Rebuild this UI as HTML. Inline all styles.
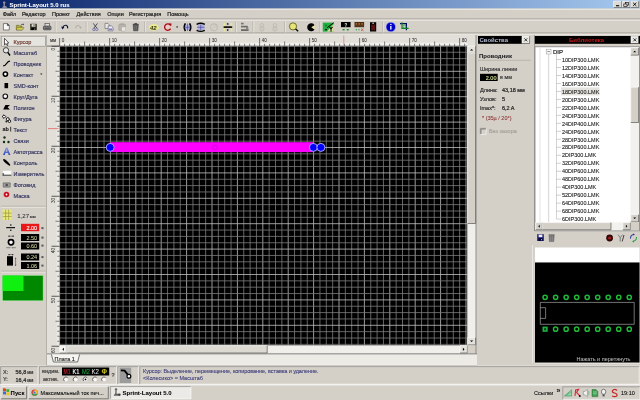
<!DOCTYPE html>
<html><head><meta charset="utf-8"><style>
html,body{margin:0;padding:0;width:640px;height:400px;overflow:hidden;background:#d4d0c8}
svg{display:block;font-family:'Liberation Sans',sans-serif;will-change:transform}
</style></head><body>
<svg width="640" height="400" viewBox="0 0 640 400" style="font-family:'Liberation Sans',sans-serif"><rect x="0" y="0" width="640" height="400" fill="#d4d0c8" /><defs><linearGradient id="tg" x1="0" x2="1" y1="0" y2="0"><stop offset="0" stop-color="#0a246a"/><stop offset="1" stop-color="#a6caf0"/></linearGradient><filter id="bl" x="-1%" y="-1%" width="102%" height="102%"><feGaussianBlur stdDeviation="0.25"/></filter></defs><rect x="0" y="0" width="640" height="8.6" fill="url(#tg)" /><text x="9.5" y="6.6" font-size="6" fill="#fff" font-weight="bold" text-anchor="start" stroke="#fff" stroke-width="0.05" >Sprint-Layout 5.0 rus</text><rect x="613.6" y="1.1" width="7.9" height="6.5" fill="#dcdad4"/><path d="M613.6,7.6 V1.1 H621.5" fill="none" stroke="#ffffff" stroke-width="0.6"/><path d="M613.6,7.6 H621.5 V1.1" fill="none" stroke="#404040" stroke-width="0.6"/><rect x="622.2" y="1.1" width="7.9" height="6.5" fill="#dcdad4"/><path d="M622.2,7.6 V1.1 H630.1" fill="none" stroke="#ffffff" stroke-width="0.6"/><path d="M622.2,7.6 H630.1 V1.1" fill="none" stroke="#404040" stroke-width="0.6"/><rect x="630.8" y="1.1" width="7.9" height="6.5" fill="#dcdad4"/><path d="M630.8,7.6 V1.1 H638.6999999999999" fill="none" stroke="#ffffff" stroke-width="0.6"/><path d="M630.8,7.6 H638.6999999999999 V1.1" fill="none" stroke="#404040" stroke-width="0.6"/><rect x="616" y="5.2" width="3.2" height="1.1" fill="#000" /><rect x="625.4" y="2.6" width="3.2" height="2.6" fill="none" stroke="#000" stroke-width="0.6"/><rect x="623.8" y="4" width="3.2" height="2.6" fill="#dcdad4" stroke="#000" stroke-width="0.6"/><path d="M633.15,2.7499999999999996 L636.35,5.949999999999999 M636.35,2.7499999999999996 L633.15,5.949999999999999" stroke="#000" stroke-width="0.9"/><circle cx="4.2" cy="2.6" r="1.2" fill="#9a9a9a"/><path d="M3.6,3.6 L3.6,6 L2,7.8 H7.4 L6.2,6.2 H4.8 V3.6 Z" fill="#a0a0a0"/><rect x="0" y="8.6" width="640" height="10" fill="#d4d0c8" /><line x1="0" y1="9.3" x2="640" y2="9.3" stroke="#f4f2ee" stroke-width="0.8" /><text x="2.8" y="16.2" font-size="5.5" fill="#202020" font-weight="normal" text-anchor="start" stroke="#202020" stroke-width="0.2" >Файл</text><text x="21.9" y="16.2" font-size="5.5" fill="#202020" font-weight="normal" text-anchor="start" stroke="#202020" stroke-width="0.2" >Редактор</text><text x="52" y="16.2" font-size="5.5" fill="#202020" font-weight="normal" text-anchor="start" stroke="#202020" stroke-width="0.2" >Проект</text><text x="76.6" y="16.2" font-size="5.5" fill="#202020" font-weight="normal" text-anchor="start" stroke="#202020" stroke-width="0.2" >Действия</text><text x="107.2" y="16.2" font-size="5.5" fill="#202020" font-weight="normal" text-anchor="start" stroke="#202020" stroke-width="0.2" >Опции</text><text x="129" y="16.2" font-size="5.5" fill="#202020" font-weight="normal" text-anchor="start" stroke="#202020" stroke-width="0.2" >Регистрация</text><text x="167.3" y="16.2" font-size="5.5" fill="#202020" font-weight="normal" text-anchor="start" stroke="#202020" stroke-width="0.2" >Помощь</text><line x1="0" y1="18.8" x2="640" y2="18.8" stroke="#a09c94" stroke-width="0.7" /><line x1="0" y1="20.2" x2="640" y2="20.2" stroke="#f4f2ee" stroke-width="0.8" /><line x1="0" y1="32.9" x2="640" y2="32.9" stroke="#9c988f" stroke-width="0.8" /><line x1="0" y1="34.3" x2="640" y2="34.3" stroke="#f6f4f0" stroke-width="0.8" /><rect x="1.2" y="36.2" width="44.3" height="10" fill="#e6e4de" stroke="#8c8880" stroke-width="0.6"/><text x="13.5" y="43.5" font-size="5.5" fill="#683428" font-weight="normal" text-anchor="start" stroke="#683428" stroke-width="0.15" >Курсор</text><text x="13.5" y="54.5" font-size="5.5" fill="#32325e" font-weight="normal" text-anchor="start" stroke="#32325e" stroke-width="0.15" >Масштаб</text><text x="13.5" y="65.5" font-size="5.5" fill="#32325e" font-weight="normal" text-anchor="start" stroke="#32325e" stroke-width="0.15" >Проводник</text><text x="13.5" y="76.5" font-size="5.5" fill="#32325e" font-weight="normal" text-anchor="start" stroke="#32325e" stroke-width="0.15" >Контакт</text><text x="13.5" y="87.5" font-size="5.5" fill="#32325e" font-weight="normal" text-anchor="start" stroke="#32325e" stroke-width="0.15" >SMD-конт</text><text x="13.5" y="98.5" font-size="5.5" fill="#32325e" font-weight="normal" text-anchor="start" stroke="#32325e" stroke-width="0.15" >Круг/Дуга</text><text x="13.5" y="109.5" font-size="5.5" fill="#32325e" font-weight="normal" text-anchor="start" stroke="#32325e" stroke-width="0.15" >Полигон</text><text x="13.5" y="120.5" font-size="5.5" fill="#32325e" font-weight="normal" text-anchor="start" stroke="#32325e" stroke-width="0.15" >Фигура</text><text x="13.5" y="131.5" font-size="5.5" fill="#32325e" font-weight="normal" text-anchor="start" stroke="#32325e" stroke-width="0.15" >Текст</text><text x="13.5" y="142.5" font-size="5.5" fill="#32325e" font-weight="normal" text-anchor="start" stroke="#32325e" stroke-width="0.15" >Связи</text><text x="13.5" y="153.5" font-size="5.5" fill="#32325e" font-weight="normal" text-anchor="start" stroke="#32325e" stroke-width="0.15" >Автотрасса</text><text x="13.5" y="164.5" font-size="5.5" fill="#32325e" font-weight="normal" text-anchor="start" stroke="#32325e" stroke-width="0.15" >Контроль</text><text x="13.5" y="175.5" font-size="5.5" fill="#32325e" font-weight="normal" text-anchor="start" stroke="#32325e" stroke-width="0.15" >Измеритель</text><text x="13.5" y="186.5" font-size="5.5" fill="#32325e" font-weight="normal" text-anchor="start" stroke="#32325e" stroke-width="0.15" >Фотовид</text><text x="13.5" y="197.5" font-size="5.5" fill="#32325e" font-weight="normal" text-anchor="start" stroke="#32325e" stroke-width="0.15" >Маска</text><line x1="46.6" y1="35" x2="46.6" y2="366" stroke="#a8a49c" stroke-width="0.8" /><rect x="47" y="34.8" width="429" height="11.4" fill="#e2dfd9" /><rect x="59.6" y="42.8" width="408" height="2.8" fill="#f2f0ec" /><line x1="59.6" y1="45.9" x2="467.5" y2="45.9" stroke="#8a8a8a" stroke-width="0.7" /><rect x="47" y="46.2" width="12.6" height="308" fill="#e2dfd9" /><rect x="56.6" y="46.2" width="2.8" height="299" fill="#ebe9e4" /><text x="50" y="42.2" font-size="4.5" fill="#303030" font-weight="normal" text-anchor="start" stroke="#303030" stroke-width="0.1" >мм</text><line x1="47" y1="46.1" x2="59.6" y2="46.1" stroke="#404040" stroke-width="0.7" /><rect x="59.6" y="46.25" width="407.79999999999995" height="299.15" fill="#000" /><g filter="url(#bl)"><line x1="59.60" y1="46.25" x2="59.60" y2="345.4" stroke="#c0c0c0" stroke-width="0.8"/><line x1="65.95" y1="46.25" x2="65.95" y2="345.4" stroke="#7c7c7c" stroke-width="0.8"/><line x1="72.30" y1="46.25" x2="72.30" y2="345.4" stroke="#7c7c7c" stroke-width="0.8"/><line x1="78.65" y1="46.25" x2="78.65" y2="345.4" stroke="#7c7c7c" stroke-width="0.8"/><line x1="85.00" y1="46.25" x2="85.00" y2="345.4" stroke="#c0c0c0" stroke-width="0.8"/><line x1="91.35" y1="46.25" x2="91.35" y2="345.4" stroke="#7c7c7c" stroke-width="0.8"/><line x1="97.70" y1="46.25" x2="97.70" y2="345.4" stroke="#7c7c7c" stroke-width="0.8"/><line x1="104.05" y1="46.25" x2="104.05" y2="345.4" stroke="#7c7c7c" stroke-width="0.8"/><line x1="110.40" y1="46.25" x2="110.40" y2="345.4" stroke="#c0c0c0" stroke-width="0.8"/><line x1="116.75" y1="46.25" x2="116.75" y2="345.4" stroke="#7c7c7c" stroke-width="0.8"/><line x1="123.10" y1="46.25" x2="123.10" y2="345.4" stroke="#7c7c7c" stroke-width="0.8"/><line x1="129.45" y1="46.25" x2="129.45" y2="345.4" stroke="#7c7c7c" stroke-width="0.8"/><line x1="135.80" y1="46.25" x2="135.80" y2="345.4" stroke="#c0c0c0" stroke-width="0.8"/><line x1="142.15" y1="46.25" x2="142.15" y2="345.4" stroke="#7c7c7c" stroke-width="0.8"/><line x1="148.50" y1="46.25" x2="148.50" y2="345.4" stroke="#7c7c7c" stroke-width="0.8"/><line x1="154.85" y1="46.25" x2="154.85" y2="345.4" stroke="#7c7c7c" stroke-width="0.8"/><line x1="161.20" y1="46.25" x2="161.20" y2="345.4" stroke="#c0c0c0" stroke-width="0.8"/><line x1="167.55" y1="46.25" x2="167.55" y2="345.4" stroke="#7c7c7c" stroke-width="0.8"/><line x1="173.90" y1="46.25" x2="173.90" y2="345.4" stroke="#7c7c7c" stroke-width="0.8"/><line x1="180.25" y1="46.25" x2="180.25" y2="345.4" stroke="#7c7c7c" stroke-width="0.8"/><line x1="186.60" y1="46.25" x2="186.60" y2="345.4" stroke="#c0c0c0" stroke-width="0.8"/><line x1="192.95" y1="46.25" x2="192.95" y2="345.4" stroke="#7c7c7c" stroke-width="0.8"/><line x1="199.30" y1="46.25" x2="199.30" y2="345.4" stroke="#7c7c7c" stroke-width="0.8"/><line x1="205.65" y1="46.25" x2="205.65" y2="345.4" stroke="#7c7c7c" stroke-width="0.8"/><line x1="212.00" y1="46.25" x2="212.00" y2="345.4" stroke="#c0c0c0" stroke-width="0.8"/><line x1="218.35" y1="46.25" x2="218.35" y2="345.4" stroke="#7c7c7c" stroke-width="0.8"/><line x1="224.70" y1="46.25" x2="224.70" y2="345.4" stroke="#7c7c7c" stroke-width="0.8"/><line x1="231.05" y1="46.25" x2="231.05" y2="345.4" stroke="#7c7c7c" stroke-width="0.8"/><line x1="237.40" y1="46.25" x2="237.40" y2="345.4" stroke="#c0c0c0" stroke-width="0.8"/><line x1="243.75" y1="46.25" x2="243.75" y2="345.4" stroke="#7c7c7c" stroke-width="0.8"/><line x1="250.10" y1="46.25" x2="250.10" y2="345.4" stroke="#7c7c7c" stroke-width="0.8"/><line x1="256.45" y1="46.25" x2="256.45" y2="345.4" stroke="#7c7c7c" stroke-width="0.8"/><line x1="262.80" y1="46.25" x2="262.80" y2="345.4" stroke="#c0c0c0" stroke-width="0.8"/><line x1="269.15" y1="46.25" x2="269.15" y2="345.4" stroke="#7c7c7c" stroke-width="0.8"/><line x1="275.50" y1="46.25" x2="275.50" y2="345.4" stroke="#7c7c7c" stroke-width="0.8"/><line x1="281.85" y1="46.25" x2="281.85" y2="345.4" stroke="#7c7c7c" stroke-width="0.8"/><line x1="288.20" y1="46.25" x2="288.20" y2="345.4" stroke="#c0c0c0" stroke-width="0.8"/><line x1="294.55" y1="46.25" x2="294.55" y2="345.4" stroke="#7c7c7c" stroke-width="0.8"/><line x1="300.90" y1="46.25" x2="300.90" y2="345.4" stroke="#7c7c7c" stroke-width="0.8"/><line x1="307.25" y1="46.25" x2="307.25" y2="345.4" stroke="#7c7c7c" stroke-width="0.8"/><line x1="313.60" y1="46.25" x2="313.60" y2="345.4" stroke="#c0c0c0" stroke-width="0.8"/><line x1="319.95" y1="46.25" x2="319.95" y2="345.4" stroke="#7c7c7c" stroke-width="0.8"/><line x1="326.30" y1="46.25" x2="326.30" y2="345.4" stroke="#7c7c7c" stroke-width="0.8"/><line x1="332.65" y1="46.25" x2="332.65" y2="345.4" stroke="#7c7c7c" stroke-width="0.8"/><line x1="339.00" y1="46.25" x2="339.00" y2="345.4" stroke="#c0c0c0" stroke-width="0.8"/><line x1="345.35" y1="46.25" x2="345.35" y2="345.4" stroke="#7c7c7c" stroke-width="0.8"/><line x1="351.70" y1="46.25" x2="351.70" y2="345.4" stroke="#7c7c7c" stroke-width="0.8"/><line x1="358.05" y1="46.25" x2="358.05" y2="345.4" stroke="#7c7c7c" stroke-width="0.8"/><line x1="364.40" y1="46.25" x2="364.40" y2="345.4" stroke="#c0c0c0" stroke-width="0.8"/><line x1="370.75" y1="46.25" x2="370.75" y2="345.4" stroke="#7c7c7c" stroke-width="0.8"/><line x1="377.10" y1="46.25" x2="377.10" y2="345.4" stroke="#7c7c7c" stroke-width="0.8"/><line x1="383.45" y1="46.25" x2="383.45" y2="345.4" stroke="#7c7c7c" stroke-width="0.8"/><line x1="389.80" y1="46.25" x2="389.80" y2="345.4" stroke="#c0c0c0" stroke-width="0.8"/><line x1="396.15" y1="46.25" x2="396.15" y2="345.4" stroke="#7c7c7c" stroke-width="0.8"/><line x1="402.50" y1="46.25" x2="402.50" y2="345.4" stroke="#7c7c7c" stroke-width="0.8"/><line x1="408.85" y1="46.25" x2="408.85" y2="345.4" stroke="#7c7c7c" stroke-width="0.8"/><line x1="415.20" y1="46.25" x2="415.20" y2="345.4" stroke="#c0c0c0" stroke-width="0.8"/><line x1="421.55" y1="46.25" x2="421.55" y2="345.4" stroke="#7c7c7c" stroke-width="0.8"/><line x1="427.90" y1="46.25" x2="427.90" y2="345.4" stroke="#7c7c7c" stroke-width="0.8"/><line x1="434.25" y1="46.25" x2="434.25" y2="345.4" stroke="#7c7c7c" stroke-width="0.8"/><line x1="440.60" y1="46.25" x2="440.60" y2="345.4" stroke="#c0c0c0" stroke-width="0.8"/><line x1="446.95" y1="46.25" x2="446.95" y2="345.4" stroke="#7c7c7c" stroke-width="0.8"/><line x1="453.30" y1="46.25" x2="453.30" y2="345.4" stroke="#7c7c7c" stroke-width="0.8"/><line x1="459.65" y1="46.25" x2="459.65" y2="345.4" stroke="#7c7c7c" stroke-width="0.8"/><line x1="466.00" y1="46.25" x2="466.00" y2="345.4" stroke="#c0c0c0" stroke-width="0.8"/><line x1="59.6" y1="45.90" x2="467.4" y2="45.90" stroke="#c0c0c0" stroke-width="0.8"/><line x1="59.6" y1="52.25" x2="467.4" y2="52.25" stroke="#7c7c7c" stroke-width="0.8"/><line x1="59.6" y1="58.60" x2="467.4" y2="58.60" stroke="#7c7c7c" stroke-width="0.8"/><line x1="59.6" y1="64.95" x2="467.4" y2="64.95" stroke="#7c7c7c" stroke-width="0.8"/><line x1="59.6" y1="71.30" x2="467.4" y2="71.30" stroke="#c0c0c0" stroke-width="0.8"/><line x1="59.6" y1="77.65" x2="467.4" y2="77.65" stroke="#7c7c7c" stroke-width="0.8"/><line x1="59.6" y1="84.00" x2="467.4" y2="84.00" stroke="#7c7c7c" stroke-width="0.8"/><line x1="59.6" y1="90.35" x2="467.4" y2="90.35" stroke="#7c7c7c" stroke-width="0.8"/><line x1="59.6" y1="96.70" x2="467.4" y2="96.70" stroke="#c0c0c0" stroke-width="0.8"/><line x1="59.6" y1="103.05" x2="467.4" y2="103.05" stroke="#7c7c7c" stroke-width="0.8"/><line x1="59.6" y1="109.40" x2="467.4" y2="109.40" stroke="#7c7c7c" stroke-width="0.8"/><line x1="59.6" y1="115.75" x2="467.4" y2="115.75" stroke="#7c7c7c" stroke-width="0.8"/><line x1="59.6" y1="122.10" x2="467.4" y2="122.10" stroke="#c0c0c0" stroke-width="0.8"/><line x1="59.6" y1="128.45" x2="467.4" y2="128.45" stroke="#7c7c7c" stroke-width="0.8"/><line x1="59.6" y1="134.80" x2="467.4" y2="134.80" stroke="#7c7c7c" stroke-width="0.8"/><line x1="59.6" y1="141.15" x2="467.4" y2="141.15" stroke="#7c7c7c" stroke-width="0.8"/><line x1="59.6" y1="147.50" x2="467.4" y2="147.50" stroke="#c0c0c0" stroke-width="0.8"/><line x1="59.6" y1="153.85" x2="467.4" y2="153.85" stroke="#7c7c7c" stroke-width="0.8"/><line x1="59.6" y1="160.20" x2="467.4" y2="160.20" stroke="#7c7c7c" stroke-width="0.8"/><line x1="59.6" y1="166.55" x2="467.4" y2="166.55" stroke="#7c7c7c" stroke-width="0.8"/><line x1="59.6" y1="172.90" x2="467.4" y2="172.90" stroke="#c0c0c0" stroke-width="0.8"/><line x1="59.6" y1="179.25" x2="467.4" y2="179.25" stroke="#7c7c7c" stroke-width="0.8"/><line x1="59.6" y1="185.60" x2="467.4" y2="185.60" stroke="#7c7c7c" stroke-width="0.8"/><line x1="59.6" y1="191.95" x2="467.4" y2="191.95" stroke="#7c7c7c" stroke-width="0.8"/><line x1="59.6" y1="198.30" x2="467.4" y2="198.30" stroke="#c0c0c0" stroke-width="0.8"/><line x1="59.6" y1="204.65" x2="467.4" y2="204.65" stroke="#7c7c7c" stroke-width="0.8"/><line x1="59.6" y1="211.00" x2="467.4" y2="211.00" stroke="#7c7c7c" stroke-width="0.8"/><line x1="59.6" y1="217.35" x2="467.4" y2="217.35" stroke="#7c7c7c" stroke-width="0.8"/><line x1="59.6" y1="223.70" x2="467.4" y2="223.70" stroke="#c0c0c0" stroke-width="0.8"/><line x1="59.6" y1="230.05" x2="467.4" y2="230.05" stroke="#7c7c7c" stroke-width="0.8"/><line x1="59.6" y1="236.40" x2="467.4" y2="236.40" stroke="#7c7c7c" stroke-width="0.8"/><line x1="59.6" y1="242.75" x2="467.4" y2="242.75" stroke="#7c7c7c" stroke-width="0.8"/><line x1="59.6" y1="249.10" x2="467.4" y2="249.10" stroke="#c0c0c0" stroke-width="0.8"/><line x1="59.6" y1="255.45" x2="467.4" y2="255.45" stroke="#7c7c7c" stroke-width="0.8"/><line x1="59.6" y1="261.80" x2="467.4" y2="261.80" stroke="#7c7c7c" stroke-width="0.8"/><line x1="59.6" y1="268.15" x2="467.4" y2="268.15" stroke="#7c7c7c" stroke-width="0.8"/><line x1="59.6" y1="274.50" x2="467.4" y2="274.50" stroke="#c0c0c0" stroke-width="0.8"/><line x1="59.6" y1="280.85" x2="467.4" y2="280.85" stroke="#7c7c7c" stroke-width="0.8"/><line x1="59.6" y1="287.20" x2="467.4" y2="287.20" stroke="#7c7c7c" stroke-width="0.8"/><line x1="59.6" y1="293.55" x2="467.4" y2="293.55" stroke="#7c7c7c" stroke-width="0.8"/><line x1="59.6" y1="299.90" x2="467.4" y2="299.90" stroke="#c0c0c0" stroke-width="0.8"/><line x1="59.6" y1="306.25" x2="467.4" y2="306.25" stroke="#7c7c7c" stroke-width="0.8"/><line x1="59.6" y1="312.60" x2="467.4" y2="312.60" stroke="#7c7c7c" stroke-width="0.8"/><line x1="59.6" y1="318.95" x2="467.4" y2="318.95" stroke="#7c7c7c" stroke-width="0.8"/><line x1="59.6" y1="325.30" x2="467.4" y2="325.30" stroke="#c0c0c0" stroke-width="0.8"/><line x1="59.6" y1="331.65" x2="467.4" y2="331.65" stroke="#7c7c7c" stroke-width="0.8"/><line x1="59.6" y1="338.00" x2="467.4" y2="338.00" stroke="#7c7c7c" stroke-width="0.8"/><line x1="59.6" y1="344.35" x2="467.4" y2="344.35" stroke="#7c7c7c" stroke-width="0.8"/></g><line x1="59.6" y1="38" x2="59.6" y2="46" stroke="#404040" stroke-width="0.7" /><text x="61.800000000000004" y="41.8" font-size="4.6" fill="#383838" font-weight="normal" text-anchor="start" stroke="#383838" stroke-width="0.06" >0</text><line x1="64.6" y1="43.8" x2="64.6" y2="46" stroke="#303030" stroke-width="0.6" /><line x1="69.6" y1="43.8" x2="69.6" y2="46" stroke="#303030" stroke-width="0.6" /><line x1="74.6" y1="43.8" x2="74.6" y2="46" stroke="#303030" stroke-width="0.6" /><line x1="79.6" y1="43.8" x2="79.6" y2="46" stroke="#303030" stroke-width="0.6" /><line x1="84.6" y1="41.5" x2="84.6" y2="46" stroke="#303030" stroke-width="0.6" /><line x1="89.6" y1="43.8" x2="89.6" y2="46" stroke="#303030" stroke-width="0.6" /><line x1="94.6" y1="43.8" x2="94.6" y2="46" stroke="#303030" stroke-width="0.6" /><line x1="99.6" y1="43.8" x2="99.6" y2="46" stroke="#303030" stroke-width="0.6" /><line x1="104.6" y1="43.8" x2="104.6" y2="46" stroke="#303030" stroke-width="0.6" /><line x1="109.6" y1="38" x2="109.6" y2="46" stroke="#404040" stroke-width="0.7" /><text x="111.8" y="41.8" font-size="4.6" fill="#383838" font-weight="normal" text-anchor="start" stroke="#383838" stroke-width="0.06" >10</text><line x1="114.6" y1="43.8" x2="114.6" y2="46" stroke="#303030" stroke-width="0.6" /><line x1="119.6" y1="43.8" x2="119.6" y2="46" stroke="#303030" stroke-width="0.6" /><line x1="124.6" y1="43.8" x2="124.6" y2="46" stroke="#303030" stroke-width="0.6" /><line x1="129.6" y1="43.8" x2="129.6" y2="46" stroke="#303030" stroke-width="0.6" /><line x1="134.6" y1="41.5" x2="134.6" y2="46" stroke="#303030" stroke-width="0.6" /><line x1="139.6" y1="43.8" x2="139.6" y2="46" stroke="#303030" stroke-width="0.6" /><line x1="144.6" y1="43.8" x2="144.6" y2="46" stroke="#303030" stroke-width="0.6" /><line x1="149.6" y1="43.8" x2="149.6" y2="46" stroke="#303030" stroke-width="0.6" /><line x1="154.6" y1="43.8" x2="154.6" y2="46" stroke="#303030" stroke-width="0.6" /><line x1="159.6" y1="38" x2="159.6" y2="46" stroke="#404040" stroke-width="0.7" /><text x="161.79999999999998" y="41.8" font-size="4.6" fill="#383838" font-weight="normal" text-anchor="start" stroke="#383838" stroke-width="0.06" >20</text><line x1="164.6" y1="43.8" x2="164.6" y2="46" stroke="#303030" stroke-width="0.6" /><line x1="169.6" y1="43.8" x2="169.6" y2="46" stroke="#303030" stroke-width="0.6" /><line x1="174.6" y1="43.8" x2="174.6" y2="46" stroke="#303030" stroke-width="0.6" /><line x1="179.6" y1="43.8" x2="179.6" y2="46" stroke="#303030" stroke-width="0.6" /><line x1="184.6" y1="41.5" x2="184.6" y2="46" stroke="#303030" stroke-width="0.6" /><line x1="189.6" y1="43.8" x2="189.6" y2="46" stroke="#303030" stroke-width="0.6" /><line x1="194.6" y1="43.8" x2="194.6" y2="46" stroke="#303030" stroke-width="0.6" /><line x1="199.6" y1="43.8" x2="199.6" y2="46" stroke="#303030" stroke-width="0.6" /><line x1="204.6" y1="43.8" x2="204.6" y2="46" stroke="#303030" stroke-width="0.6" /><line x1="209.6" y1="38" x2="209.6" y2="46" stroke="#404040" stroke-width="0.7" /><text x="211.79999999999998" y="41.8" font-size="4.6" fill="#383838" font-weight="normal" text-anchor="start" stroke="#383838" stroke-width="0.06" >30</text><line x1="214.6" y1="43.8" x2="214.6" y2="46" stroke="#303030" stroke-width="0.6" /><line x1="219.6" y1="43.8" x2="219.6" y2="46" stroke="#303030" stroke-width="0.6" /><line x1="224.6" y1="43.8" x2="224.6" y2="46" stroke="#303030" stroke-width="0.6" /><line x1="229.6" y1="43.8" x2="229.6" y2="46" stroke="#303030" stroke-width="0.6" /><line x1="234.6" y1="41.5" x2="234.6" y2="46" stroke="#303030" stroke-width="0.6" /><line x1="239.6" y1="43.8" x2="239.6" y2="46" stroke="#303030" stroke-width="0.6" /><line x1="244.6" y1="43.8" x2="244.6" y2="46" stroke="#303030" stroke-width="0.6" /><line x1="249.6" y1="43.8" x2="249.6" y2="46" stroke="#303030" stroke-width="0.6" /><line x1="254.6" y1="43.8" x2="254.6" y2="46" stroke="#303030" stroke-width="0.6" /><line x1="259.6" y1="38" x2="259.6" y2="46" stroke="#404040" stroke-width="0.7" /><text x="261.8" y="41.8" font-size="4.6" fill="#383838" font-weight="normal" text-anchor="start" stroke="#383838" stroke-width="0.06" >40</text><line x1="264.6" y1="43.8" x2="264.6" y2="46" stroke="#303030" stroke-width="0.6" /><line x1="269.6" y1="43.8" x2="269.6" y2="46" stroke="#303030" stroke-width="0.6" /><line x1="274.6" y1="43.8" x2="274.6" y2="46" stroke="#303030" stroke-width="0.6" /><line x1="279.6" y1="43.8" x2="279.6" y2="46" stroke="#303030" stroke-width="0.6" /><line x1="284.6" y1="41.5" x2="284.6" y2="46" stroke="#303030" stroke-width="0.6" /><line x1="289.6" y1="43.8" x2="289.6" y2="46" stroke="#303030" stroke-width="0.6" /><line x1="294.6" y1="43.8" x2="294.6" y2="46" stroke="#303030" stroke-width="0.6" /><line x1="299.6" y1="43.8" x2="299.6" y2="46" stroke="#303030" stroke-width="0.6" /><line x1="304.6" y1="43.8" x2="304.6" y2="46" stroke="#303030" stroke-width="0.6" /><line x1="309.6" y1="38" x2="309.6" y2="46" stroke="#404040" stroke-width="0.7" /><text x="311.8" y="41.8" font-size="4.6" fill="#383838" font-weight="normal" text-anchor="start" stroke="#383838" stroke-width="0.06" >50</text><line x1="314.6" y1="43.8" x2="314.6" y2="46" stroke="#303030" stroke-width="0.6" /><line x1="319.6" y1="43.8" x2="319.6" y2="46" stroke="#303030" stroke-width="0.6" /><line x1="324.6" y1="43.8" x2="324.6" y2="46" stroke="#303030" stroke-width="0.6" /><line x1="329.6" y1="43.8" x2="329.6" y2="46" stroke="#303030" stroke-width="0.6" /><line x1="334.6" y1="41.5" x2="334.6" y2="46" stroke="#303030" stroke-width="0.6" /><line x1="339.6" y1="43.8" x2="339.6" y2="46" stroke="#303030" stroke-width="0.6" /><line x1="344.6" y1="43.8" x2="344.6" y2="46" stroke="#303030" stroke-width="0.6" /><line x1="349.6" y1="43.8" x2="349.6" y2="46" stroke="#303030" stroke-width="0.6" /><line x1="354.6" y1="43.8" x2="354.6" y2="46" stroke="#303030" stroke-width="0.6" /><line x1="359.6" y1="38" x2="359.6" y2="46" stroke="#404040" stroke-width="0.7" /><text x="361.8" y="41.8" font-size="4.6" fill="#383838" font-weight="normal" text-anchor="start" stroke="#383838" stroke-width="0.06" >60</text><line x1="364.6" y1="43.8" x2="364.6" y2="46" stroke="#303030" stroke-width="0.6" /><line x1="369.6" y1="43.8" x2="369.6" y2="46" stroke="#303030" stroke-width="0.6" /><line x1="374.6" y1="43.8" x2="374.6" y2="46" stroke="#303030" stroke-width="0.6" /><line x1="379.6" y1="43.8" x2="379.6" y2="46" stroke="#303030" stroke-width="0.6" /><line x1="384.6" y1="41.5" x2="384.6" y2="46" stroke="#303030" stroke-width="0.6" /><line x1="389.6" y1="43.8" x2="389.6" y2="46" stroke="#303030" stroke-width="0.6" /><line x1="394.6" y1="43.8" x2="394.6" y2="46" stroke="#303030" stroke-width="0.6" /><line x1="399.6" y1="43.8" x2="399.6" y2="46" stroke="#303030" stroke-width="0.6" /><line x1="404.6" y1="43.8" x2="404.6" y2="46" stroke="#303030" stroke-width="0.6" /><line x1="409.6" y1="38" x2="409.6" y2="46" stroke="#404040" stroke-width="0.7" /><text x="411.8" y="41.8" font-size="4.6" fill="#383838" font-weight="normal" text-anchor="start" stroke="#383838" stroke-width="0.06" >70</text><line x1="414.6" y1="43.8" x2="414.6" y2="46" stroke="#303030" stroke-width="0.6" /><line x1="419.6" y1="43.8" x2="419.6" y2="46" stroke="#303030" stroke-width="0.6" /><line x1="424.6" y1="43.8" x2="424.6" y2="46" stroke="#303030" stroke-width="0.6" /><line x1="429.6" y1="43.8" x2="429.6" y2="46" stroke="#303030" stroke-width="0.6" /><line x1="434.6" y1="41.5" x2="434.6" y2="46" stroke="#303030" stroke-width="0.6" /><line x1="439.6" y1="43.8" x2="439.6" y2="46" stroke="#303030" stroke-width="0.6" /><line x1="444.6" y1="43.8" x2="444.6" y2="46" stroke="#303030" stroke-width="0.6" /><line x1="449.6" y1="43.8" x2="449.6" y2="46" stroke="#303030" stroke-width="0.6" /><line x1="454.6" y1="43.8" x2="454.6" y2="46" stroke="#303030" stroke-width="0.6" /><line x1="459.6" y1="38" x2="459.6" y2="46" stroke="#404040" stroke-width="0.7" /><text x="461.8" y="41.8" font-size="4.6" fill="#383838" font-weight="normal" text-anchor="start" stroke="#383838" stroke-width="0.06" >80</text><line x1="464.6" y1="43.8" x2="464.6" y2="46" stroke="#303030" stroke-width="0.6" /><line x1="51.5" y1="46.25" x2="59.6" y2="46.25" stroke="#202020" stroke-width="0.7" /><text x="0" y="0" font-size="4.6" fill="#383838" font-weight="normal" text-anchor="end" stroke="#383838" stroke-width="0.06" transform="translate(54.7,47.85) rotate(-90)" >0</text><line x1="57.3" y1="51.25" x2="59.6" y2="51.25" stroke="#303030" stroke-width="0.6" /><line x1="57.3" y1="56.25" x2="59.6" y2="56.25" stroke="#303030" stroke-width="0.6" /><line x1="57.3" y1="61.25" x2="59.6" y2="61.25" stroke="#303030" stroke-width="0.6" /><line x1="57.3" y1="66.25" x2="59.6" y2="66.25" stroke="#303030" stroke-width="0.6" /><line x1="55.5" y1="71.25" x2="59.6" y2="71.25" stroke="#303030" stroke-width="0.6" /><line x1="57.3" y1="76.25" x2="59.6" y2="76.25" stroke="#303030" stroke-width="0.6" /><line x1="57.3" y1="81.25" x2="59.6" y2="81.25" stroke="#303030" stroke-width="0.6" /><line x1="57.3" y1="86.25" x2="59.6" y2="86.25" stroke="#303030" stroke-width="0.6" /><line x1="57.3" y1="91.25" x2="59.6" y2="91.25" stroke="#303030" stroke-width="0.6" /><line x1="51.5" y1="96.25" x2="59.6" y2="96.25" stroke="#202020" stroke-width="0.7" /><text x="0" y="0" font-size="4.6" fill="#383838" font-weight="normal" text-anchor="end" stroke="#383838" stroke-width="0.06" transform="translate(54.7,97.85) rotate(-90)" >10</text><line x1="57.3" y1="101.25" x2="59.6" y2="101.25" stroke="#303030" stroke-width="0.6" /><line x1="57.3" y1="106.25" x2="59.6" y2="106.25" stroke="#303030" stroke-width="0.6" /><line x1="57.3" y1="111.25" x2="59.6" y2="111.25" stroke="#303030" stroke-width="0.6" /><line x1="57.3" y1="116.25" x2="59.6" y2="116.25" stroke="#303030" stroke-width="0.6" /><line x1="55.5" y1="121.25" x2="59.6" y2="121.25" stroke="#303030" stroke-width="0.6" /><line x1="57.3" y1="126.25" x2="59.6" y2="126.25" stroke="#303030" stroke-width="0.6" /><line x1="57.3" y1="131.25" x2="59.6" y2="131.25" stroke="#303030" stroke-width="0.6" /><line x1="57.3" y1="136.25" x2="59.6" y2="136.25" stroke="#303030" stroke-width="0.6" /><line x1="57.3" y1="141.25" x2="59.6" y2="141.25" stroke="#303030" stroke-width="0.6" /><line x1="51.5" y1="146.25" x2="59.6" y2="146.25" stroke="#202020" stroke-width="0.7" /><text x="0" y="0" font-size="4.6" fill="#383838" font-weight="normal" text-anchor="end" stroke="#383838" stroke-width="0.06" transform="translate(54.7,147.85) rotate(-90)" >20</text><line x1="57.3" y1="151.25" x2="59.6" y2="151.25" stroke="#303030" stroke-width="0.6" /><line x1="57.3" y1="156.25" x2="59.6" y2="156.25" stroke="#303030" stroke-width="0.6" /><line x1="57.3" y1="161.25" x2="59.6" y2="161.25" stroke="#303030" stroke-width="0.6" /><line x1="57.3" y1="166.25" x2="59.6" y2="166.25" stroke="#303030" stroke-width="0.6" /><line x1="55.5" y1="171.25" x2="59.6" y2="171.25" stroke="#303030" stroke-width="0.6" /><line x1="57.3" y1="176.25" x2="59.6" y2="176.25" stroke="#303030" stroke-width="0.6" /><line x1="57.3" y1="181.25" x2="59.6" y2="181.25" stroke="#303030" stroke-width="0.6" /><line x1="57.3" y1="186.25" x2="59.6" y2="186.25" stroke="#303030" stroke-width="0.6" /><line x1="57.3" y1="191.25" x2="59.6" y2="191.25" stroke="#303030" stroke-width="0.6" /><line x1="51.5" y1="196.25" x2="59.6" y2="196.25" stroke="#202020" stroke-width="0.7" /><text x="0" y="0" font-size="4.6" fill="#383838" font-weight="normal" text-anchor="end" stroke="#383838" stroke-width="0.06" transform="translate(54.7,197.85) rotate(-90)" >30</text><line x1="57.3" y1="201.25" x2="59.6" y2="201.25" stroke="#303030" stroke-width="0.6" /><line x1="57.3" y1="206.25" x2="59.6" y2="206.25" stroke="#303030" stroke-width="0.6" /><line x1="57.3" y1="211.25" x2="59.6" y2="211.25" stroke="#303030" stroke-width="0.6" /><line x1="57.3" y1="216.25" x2="59.6" y2="216.25" stroke="#303030" stroke-width="0.6" /><line x1="55.5" y1="221.25" x2="59.6" y2="221.25" stroke="#303030" stroke-width="0.6" /><line x1="57.3" y1="226.25" x2="59.6" y2="226.25" stroke="#303030" stroke-width="0.6" /><line x1="57.3" y1="231.25" x2="59.6" y2="231.25" stroke="#303030" stroke-width="0.6" /><line x1="57.3" y1="236.25" x2="59.6" y2="236.25" stroke="#303030" stroke-width="0.6" /><line x1="57.3" y1="241.25" x2="59.6" y2="241.25" stroke="#303030" stroke-width="0.6" /><line x1="51.5" y1="246.25" x2="59.6" y2="246.25" stroke="#202020" stroke-width="0.7" /><text x="0" y="0" font-size="4.6" fill="#383838" font-weight="normal" text-anchor="end" stroke="#383838" stroke-width="0.06" transform="translate(54.7,247.85) rotate(-90)" >40</text><line x1="57.3" y1="251.25" x2="59.6" y2="251.25" stroke="#303030" stroke-width="0.6" /><line x1="57.3" y1="256.25" x2="59.6" y2="256.25" stroke="#303030" stroke-width="0.6" /><line x1="57.3" y1="261.25" x2="59.6" y2="261.25" stroke="#303030" stroke-width="0.6" /><line x1="57.3" y1="266.25" x2="59.6" y2="266.25" stroke="#303030" stroke-width="0.6" /><line x1="55.5" y1="271.25" x2="59.6" y2="271.25" stroke="#303030" stroke-width="0.6" /><line x1="57.3" y1="276.25" x2="59.6" y2="276.25" stroke="#303030" stroke-width="0.6" /><line x1="57.3" y1="281.25" x2="59.6" y2="281.25" stroke="#303030" stroke-width="0.6" /><line x1="57.3" y1="286.25" x2="59.6" y2="286.25" stroke="#303030" stroke-width="0.6" /><line x1="57.3" y1="291.25" x2="59.6" y2="291.25" stroke="#303030" stroke-width="0.6" /><line x1="51.5" y1="296.25" x2="59.6" y2="296.25" stroke="#202020" stroke-width="0.7" /><text x="0" y="0" font-size="4.6" fill="#383838" font-weight="normal" text-anchor="end" stroke="#383838" stroke-width="0.06" transform="translate(54.7,297.85) rotate(-90)" >50</text><line x1="57.3" y1="301.25" x2="59.6" y2="301.25" stroke="#303030" stroke-width="0.6" /><line x1="57.3" y1="306.25" x2="59.6" y2="306.25" stroke="#303030" stroke-width="0.6" /><line x1="57.3" y1="311.25" x2="59.6" y2="311.25" stroke="#303030" stroke-width="0.6" /><line x1="57.3" y1="316.25" x2="59.6" y2="316.25" stroke="#303030" stroke-width="0.6" /><line x1="55.5" y1="321.25" x2="59.6" y2="321.25" stroke="#303030" stroke-width="0.6" /><line x1="57.3" y1="326.25" x2="59.6" y2="326.25" stroke="#303030" stroke-width="0.6" /><line x1="57.3" y1="331.25" x2="59.6" y2="331.25" stroke="#303030" stroke-width="0.6" /><line x1="57.3" y1="336.25" x2="59.6" y2="336.25" stroke="#303030" stroke-width="0.6" /><line x1="57.3" y1="341.25" x2="59.6" y2="341.25" stroke="#303030" stroke-width="0.6" /><line x1="51.5" y1="346.25" x2="59.6" y2="346.25" stroke="#202020" stroke-width="0.7" /><text x="0" y="0" font-size="4.6" fill="#383838" font-weight="normal" text-anchor="end" stroke="#383838" stroke-width="0.06" transform="translate(54.7,347.85) rotate(-90)" >60</text><line x1="343.8" y1="35.5" x2="343.8" y2="45.5" stroke="#e05050" stroke-width="0.5" /><line x1="48" y1="128.6" x2="58.5" y2="128.6" stroke="#e04040" stroke-width="0.6" /><rect x="110.2" y="142.2" width="203.2" height="9.9" fill="#ff00ff" /><circle cx="215" cy="147.4" r="2.3" fill="none" stroke="#b000d0" stroke-width="0.6"/><circle cx="110.2" cy="147.4" r="4" fill="#0000ff" stroke="#a8a0ff" stroke-width="1"/><circle cx="313.4" cy="147.4" r="4" fill="#0000ff" stroke="#a8a0ff" stroke-width="1"/><circle cx="320.9" cy="147.4" r="4" fill="#0000ff" stroke="#a8a0ff" stroke-width="1"/><rect x="467.5" y="46" width="8.4" height="299.5" fill="#f0efeb" /><rect x="467.7" y="46.1" width="7.9" height="7.3" fill="#e4e2dc"/><path d="M467.7,53.4 V46.1 H475.59999999999997" fill="none" stroke="#ffffff" stroke-width="0.6"/><path d="M467.7,53.4 H475.59999999999997 V46.1" fill="none" stroke="#404040" stroke-width="0.6"/><path d="M470.0,50.599999999999994 H473.20000000000005 L471.6,49.0 Z" fill="#000"/><rect x="467.7" y="53.4" width="7.9" height="170.1" fill="#d4d0c8"/><path d="M467.7,223.5 V53.4 H475.59999999999997" fill="none" stroke="#ffffff" stroke-width="0.6"/><path d="M467.7,223.5 H475.59999999999997 V53.4" fill="none" stroke="#404040" stroke-width="0.6"/><rect x="467.7" y="337.6" width="7.9" height="7.3" fill="#e4e2dc"/><path d="M467.7,344.90000000000003 V337.6 H475.59999999999997" fill="none" stroke="#ffffff" stroke-width="0.6"/><path d="M467.7,344.90000000000003 H475.59999999999997 V337.6" fill="none" stroke="#404040" stroke-width="0.6"/><path d="M470.0,340.4 H473.20000000000005 L471.6,342.0 Z" fill="#000"/><rect x="59.6" y="345.5" width="408" height="7.8" fill="#f0efeb" /><rect x="59.8" y="345.7" width="6.6" height="7.3" fill="#f4f4f2"/><path d="M59.8,353.0 V345.7 H66.39999999999999" fill="none" stroke="#ffffff" stroke-width="0.6"/><path d="M59.8,353.0 H66.39999999999999 V345.7" fill="none" stroke="#404040" stroke-width="0.6"/><path d="M63.9,347.7 V350.90000000000003 L62.300000000000004,349.3 Z" fill="#000"/><rect x="66.6" y="345.7" width="200.6" height="7.3" fill="#dcd9d2"/><path d="M66.6,353.0 V345.7 H267.2" fill="none" stroke="#ffffff" stroke-width="0.6"/><path d="M66.6,353.0 H267.2 V345.7" fill="none" stroke="#404040" stroke-width="0.6"/><rect x="460" y="345.7" width="7.4" height="7.3" fill="#e4e2dc"/><path d="M460,353.0 V345.7 H467.4" fill="none" stroke="#ffffff" stroke-width="0.6"/><path d="M460,353.0 H467.4 V345.7" fill="none" stroke="#404040" stroke-width="0.6"/><path d="M462.9,347.7 V350.90000000000003 L464.5,349.3 Z" fill="#000"/><rect x="467.6" y="345.5" width="8.4" height="7.8" fill="#d4d0c8" /><line x1="47" y1="354" x2="477" y2="354" stroke="#707070" stroke-width="1" /><rect x="47" y="354.5" width="430" height="11" fill="#ecebe6" /><line x1="47" y1="365.6" x2="477" y2="365.6" stroke="#a0a0a0" stroke-width="0.6" /><path d="M51.4,354.4 L53.4,362 L77.6,362 L79.6,354.4" fill="#f6f5f2" stroke="#303030" stroke-width="0.65"/><text x="54.6" y="360.7" font-size="5.5" fill="#202020" font-weight="normal" text-anchor="start" stroke="#202020" stroke-width="0.12" >Плата 1</text><line x1="476" y1="35" x2="476" y2="353.8" stroke="#707070" stroke-width="0.7" /><rect x="478" y="36" width="44" height="7.8" fill="#000" /><text x="479.5" y="42" font-size="6" fill="#b4bcd4" font-weight="bold" text-anchor="start" stroke="#b4bcd4" stroke-width="0.01" >Свойства</text><rect x="522" y="36.2" width="7.6" height="7.3" fill="#e8e8e4"/><path d="M522,43.5 V36.2 H529.6" fill="none" stroke="#ffffff" stroke-width="0.6"/><path d="M522,43.5 H529.6 V36.2" fill="none" stroke="#404040" stroke-width="0.6"/><path d="M524.3,38.35 L527.3,41.35 M527.3,38.35 L524.3,41.35" stroke="#101010" stroke-width="0.8"/><text x="479" y="57.8" font-size="6" fill="#202020" font-weight="bold" text-anchor="start" stroke="#202020" stroke-width="0.05" >Проводник</text><line x1="478" y1="60.3" x2="531" y2="60.3" stroke="#a8a49c" stroke-width="0.6" /><text x="480" y="71.3" font-size="5.5" fill="#404040" font-weight="normal" text-anchor="start" stroke="#404040" stroke-width="0.2" >Ширина линии</text><rect x="480" y="73.8" width="17.7" height="7.2" fill="#000" /><text x="496.5" y="79.5" font-size="5.5" fill="#c8d890" font-weight="normal" text-anchor="end" stroke="#c8d890" stroke-width="0.2" >2.00</text><text x="500" y="79.3" font-size="5.5" fill="#404040" font-weight="normal" text-anchor="start" stroke="#404040" stroke-width="0.2" >в мм</text><text x="480" y="92" font-size="5.5" fill="#303030" font-weight="normal" text-anchor="start" stroke="#303030" stroke-width="0.2" >Длина:</text><text x="502" y="92" font-size="5.5" fill="#202020" font-weight="normal" text-anchor="start" stroke="#202020" stroke-width="0.2" >43,18 мм</text><text x="480" y="100.5" font-size="5.5" fill="#303030" font-weight="normal" text-anchor="start" stroke="#303030" stroke-width="0.2" >Узлов:</text><text x="502" y="100.5" font-size="5.5" fill="#202020" font-weight="normal" text-anchor="start" stroke="#202020" stroke-width="0.2" >5</text><text x="480" y="110" font-size="5.5" fill="#303030" font-weight="normal" text-anchor="start" stroke="#303030" stroke-width="0.2" >Imax*:</text><text x="502" y="110" font-size="5.5" fill="#202020" font-weight="normal" text-anchor="start" stroke="#202020" stroke-width="0.2" >6,2 A</text><text x="482" y="119.5" font-size="5.5" fill="#8c3434" font-weight="normal" text-anchor="start" stroke="#8c3434" stroke-width="0.08" >* (35µ / 20°)</text><rect x="480.3" y="128.3" width="5.8" height="6" fill="#d4d0c8"/><path d="M480.3,134.3 V128.3 H486.1" fill="none" stroke="#808080" stroke-width="0.6"/><path d="M480.3,134.3 H486.1 V128.3" fill="none" stroke="#ffffff" stroke-width="0.6"/><path d="M481,134 V129 H486" fill="none" stroke="#404040" stroke-width="0.5"/><text x="489" y="132.6" font-size="5.5" fill="#a8a49c" font-weight="normal" text-anchor="start" stroke="#a8a49c" stroke-width="0.2" >Без зазора</text><line x1="534.6" y1="35" x2="534.6" y2="231" stroke="#808080" stroke-width="0.7" /><rect x="532" y="245" width="1" height="118" fill="#e8e6e2" /><line x1="535" y1="363.2" x2="640" y2="363.2" stroke="#f0eeea" stroke-width="0.8" /><rect x="534.8" y="36" width="105.2" height="7.8" fill="#000" /><text x="569" y="42" font-size="6" fill="#c41c1c" font-weight="bold" text-anchor="start" stroke="#c41c1c" stroke-width="0.01" >Библиотека</text><rect x="631" y="36.2" width="7.6" height="7.3" fill="#e8e8e4"/><path d="M631,43.5 V36.2 H638.6" fill="none" stroke="#ffffff" stroke-width="0.6"/><path d="M631,43.5 H638.6 V36.2" fill="none" stroke="#404040" stroke-width="0.6"/><path d="M633.3,38.35 L636.3,41.35 M636.3,38.35 L633.3,41.35" stroke="#101010" stroke-width="0.8"/><rect x="535" y="46.8" width="104.5" height="184" fill="#fff" stroke="#808080" stroke-width="0.8"/><text x="553" y="53.6" font-size="6" fill="#202020" font-weight="normal" text-anchor="start" stroke="#202020" stroke-width="0.2" >DIP</text><rect x="546.2" y="49.2" width="4.8" height="4.8" fill="#fff" stroke="#909090" stroke-width="0.5"/><line x1="547.2" y1="51.6" x2="550" y2="51.6" stroke="#202020" stroke-width="0.5" /><line x1="548.7" y1="54" x2="548.7" y2="222" stroke="#a8a8a8" stroke-width="0.5" /><line x1="540" y1="48" x2="540" y2="222" stroke="#d0d0d0" stroke-width="0.6" /><line x1="556.5" y1="54" x2="556.5" y2="219" stroke="#a8a8a8" stroke-width="0.5" /><line x1="556.5" y1="59.5" x2="561" y2="59.5" stroke="#a0a0a0" stroke-width="0.5" /><text x="562" y="61.7" font-size="6.2" fill="#202020" font-weight="normal" text-anchor="start" stroke="#202020" stroke-width="0.1" textLength="37.31" lengthAdjust="spacingAndGlyphs">10DIP300.LMK</text><line x1="556.5" y1="67.48" x2="561" y2="67.48" stroke="#a0a0a0" stroke-width="0.5" /><text x="562" y="69.68" font-size="6.2" fill="#202020" font-weight="normal" text-anchor="start" stroke="#202020" stroke-width="0.1" textLength="37.31" lengthAdjust="spacingAndGlyphs">12DIP300.LMK</text><line x1="556.5" y1="75.46000000000001" x2="561" y2="75.46000000000001" stroke="#a0a0a0" stroke-width="0.5" /><text x="562" y="77.66000000000001" font-size="6.2" fill="#202020" font-weight="normal" text-anchor="start" stroke="#202020" stroke-width="0.1" textLength="37.31" lengthAdjust="spacingAndGlyphs">14DIP300.LMK</text><line x1="556.5" y1="83.44" x2="561" y2="83.44" stroke="#a0a0a0" stroke-width="0.5" /><text x="562" y="85.64" font-size="6.2" fill="#202020" font-weight="normal" text-anchor="start" stroke="#202020" stroke-width="0.1" textLength="37.31" lengthAdjust="spacingAndGlyphs">16DIP300.LMK</text><rect x="561" y="87.42" width="38.5" height="8" fill="#e4e2dc" /><line x1="556.5" y1="91.42" x2="561" y2="91.42" stroke="#a0a0a0" stroke-width="0.5" /><text x="562" y="93.62" font-size="6.2" fill="#202020" font-weight="normal" text-anchor="start" stroke="#202020" stroke-width="0.1" textLength="37.31" lengthAdjust="spacingAndGlyphs">18DIP300.LMK</text><line x1="556.5" y1="99.4" x2="561" y2="99.4" stroke="#a0a0a0" stroke-width="0.5" /><text x="562" y="101.60000000000001" font-size="6.2" fill="#202020" font-weight="normal" text-anchor="start" stroke="#202020" stroke-width="0.1" textLength="37.31" lengthAdjust="spacingAndGlyphs">20DIP300.LMK</text><line x1="556.5" y1="107.38" x2="561" y2="107.38" stroke="#a0a0a0" stroke-width="0.5" /><text x="562" y="109.58" font-size="6.2" fill="#202020" font-weight="normal" text-anchor="start" stroke="#202020" stroke-width="0.1" textLength="37.31" lengthAdjust="spacingAndGlyphs">22DIP400.LMK</text><line x1="556.5" y1="115.36" x2="561" y2="115.36" stroke="#a0a0a0" stroke-width="0.5" /><text x="562" y="117.56" font-size="6.2" fill="#202020" font-weight="normal" text-anchor="start" stroke="#202020" stroke-width="0.1" textLength="37.31" lengthAdjust="spacingAndGlyphs">24DIP300.LMK</text><line x1="556.5" y1="123.34" x2="561" y2="123.34" stroke="#a0a0a0" stroke-width="0.5" /><text x="562" y="125.54" font-size="6.2" fill="#202020" font-weight="normal" text-anchor="start" stroke="#202020" stroke-width="0.1" textLength="37.31" lengthAdjust="spacingAndGlyphs">24DIP400.LMK</text><line x1="556.5" y1="131.32" x2="561" y2="131.32" stroke="#a0a0a0" stroke-width="0.5" /><text x="562" y="133.51999999999998" font-size="6.2" fill="#202020" font-weight="normal" text-anchor="start" stroke="#202020" stroke-width="0.1" textLength="37.31" lengthAdjust="spacingAndGlyphs">24DIP600.LMK</text><line x1="556.5" y1="139.3" x2="561" y2="139.3" stroke="#a0a0a0" stroke-width="0.5" /><text x="562" y="141.5" font-size="6.2" fill="#202020" font-weight="normal" text-anchor="start" stroke="#202020" stroke-width="0.1" textLength="37.31" lengthAdjust="spacingAndGlyphs">28DIP300.LMK</text><line x1="556.5" y1="147.28" x2="561" y2="147.28" stroke="#a0a0a0" stroke-width="0.5" /><text x="562" y="149.48" font-size="6.2" fill="#202020" font-weight="normal" text-anchor="start" stroke="#202020" stroke-width="0.1" textLength="37.31" lengthAdjust="spacingAndGlyphs">28DIP600.LMK</text><line x1="556.5" y1="155.26" x2="561" y2="155.26" stroke="#a0a0a0" stroke-width="0.5" /><text x="562" y="157.45999999999998" font-size="6.2" fill="#202020" font-weight="normal" text-anchor="start" stroke="#202020" stroke-width="0.1" textLength="34.25" lengthAdjust="spacingAndGlyphs">2DIP300.LMK</text><line x1="556.5" y1="163.24" x2="561" y2="163.24" stroke="#a0a0a0" stroke-width="0.5" /><text x="562" y="165.44" font-size="6.2" fill="#202020" font-weight="normal" text-anchor="start" stroke="#202020" stroke-width="0.1" textLength="37.31" lengthAdjust="spacingAndGlyphs">32DIP600.LMK</text><line x1="556.5" y1="171.22" x2="561" y2="171.22" stroke="#a0a0a0" stroke-width="0.5" /><text x="562" y="173.42" font-size="6.2" fill="#202020" font-weight="normal" text-anchor="start" stroke="#202020" stroke-width="0.1" textLength="37.31" lengthAdjust="spacingAndGlyphs">40DIP600.LMK</text><line x1="556.5" y1="179.2" x2="561" y2="179.2" stroke="#a0a0a0" stroke-width="0.5" /><text x="562" y="181.39999999999998" font-size="6.2" fill="#202020" font-weight="normal" text-anchor="start" stroke="#202020" stroke-width="0.1" textLength="37.31" lengthAdjust="spacingAndGlyphs">48DIP600.LMK</text><line x1="556.5" y1="187.18" x2="561" y2="187.18" stroke="#a0a0a0" stroke-width="0.5" /><text x="562" y="189.38" font-size="6.2" fill="#202020" font-weight="normal" text-anchor="start" stroke="#202020" stroke-width="0.1" textLength="34.25" lengthAdjust="spacingAndGlyphs">4DIP300.LMK</text><line x1="556.5" y1="195.16" x2="561" y2="195.16" stroke="#a0a0a0" stroke-width="0.5" /><text x="562" y="197.35999999999999" font-size="6.2" fill="#202020" font-weight="normal" text-anchor="start" stroke="#202020" stroke-width="0.1" textLength="37.31" lengthAdjust="spacingAndGlyphs">52DIP600.LMK</text><line x1="556.5" y1="203.14000000000001" x2="561" y2="203.14000000000001" stroke="#a0a0a0" stroke-width="0.5" /><text x="562" y="205.34" font-size="6.2" fill="#202020" font-weight="normal" text-anchor="start" stroke="#202020" stroke-width="0.1" textLength="37.31" lengthAdjust="spacingAndGlyphs">64DIP600.LMK</text><line x1="556.5" y1="211.12" x2="561" y2="211.12" stroke="#a0a0a0" stroke-width="0.5" /><text x="562" y="213.32" font-size="6.2" fill="#202020" font-weight="normal" text-anchor="start" stroke="#202020" stroke-width="0.1" textLength="37.31" lengthAdjust="spacingAndGlyphs">68DIP600.LMK</text><line x1="556.5" y1="219.10000000000002" x2="561" y2="219.10000000000002" stroke="#a0a0a0" stroke-width="0.5" /><text x="562" y="221.3" font-size="6.2" fill="#202020" font-weight="normal" text-anchor="start" stroke="#202020" stroke-width="0.1" textLength="34.25" lengthAdjust="spacingAndGlyphs">6DIP300.LMK</text><rect x="630.5" y="47.5" width="8.5" height="175" fill="#f2f1ee" /><rect x="630.8" y="47.8" width="7.8" height="7.3" fill="#d4d0c8"/><path d="M630.8,55.099999999999994 V47.8 H638.5999999999999" fill="none" stroke="#ffffff" stroke-width="0.6"/><path d="M630.8,55.099999999999994 H638.5999999999999 V47.8" fill="none" stroke="#404040" stroke-width="0.6"/><path d="M633.2,52.15 H636.2 L634.7,50.65 Z" fill="#000"/><rect x="630.8" y="87.2" width="7.8" height="35.3" fill="#d4d0c8"/><path d="M630.8,122.5 V87.2 H638.5999999999999" fill="none" stroke="#ffffff" stroke-width="0.6"/><path d="M630.8,122.5 H638.5999999999999 V87.2" fill="none" stroke="#404040" stroke-width="0.6"/><rect x="630.8" y="214.6" width="7.8" height="7.3" fill="#d4d0c8"/><path d="M630.8,221.9 V214.6 H638.5999999999999" fill="none" stroke="#ffffff" stroke-width="0.6"/><path d="M630.8,221.9 H638.5999999999999 V214.6" fill="none" stroke="#404040" stroke-width="0.6"/><path d="M633.2,217.45 H636.2 L634.7,218.95 Z" fill="#000"/><rect x="535.5" y="222.4" width="95.3" height="7.8" fill="#f2f1ee" /><rect x="535.8" y="222.6" width="6.6" height="7.2" fill="#d4d0c8"/><path d="M535.8,229.79999999999998 V222.6 H542.4" fill="none" stroke="#ffffff" stroke-width="0.6"/><path d="M535.8,229.79999999999998 H542.4 V222.6" fill="none" stroke="#404040" stroke-width="0.6"/><path d="M539.75,224.7 V227.7 L538.25,226.2 Z" fill="#000"/><rect x="542.6" y="222.6" width="68.4" height="7.2" fill="#d4d0c8"/><path d="M542.6,229.79999999999998 V222.6 H611.0" fill="none" stroke="#ffffff" stroke-width="0.6"/><path d="M542.6,229.79999999999998 H611.0 V222.6" fill="none" stroke="#404040" stroke-width="0.6"/><rect x="622.8" y="222.6" width="7.6" height="7.2" fill="#d4d0c8"/><path d="M622.8,229.79999999999998 V222.6 H630.4" fill="none" stroke="#ffffff" stroke-width="0.6"/><path d="M622.8,229.79999999999998 H630.4 V222.6" fill="none" stroke="#404040" stroke-width="0.6"/><path d="M625.85,224.7 V227.7 L627.35,226.2 Z" fill="#000"/><rect x="630.8" y="222.4" width="8.2" height="7.8" fill="#d4d0c8" /><rect x="537.2" y="234.2" width="6.6" height="6.8" fill="#1a1a70"/><rect x="538.6" y="234.6" width="3.8" height="2.6" fill="#f0f0f0"/><rect x="538.6" y="238.4" width="3.8" height="2.4" fill="#000030"/><rect x="541" y="239.2" width="1" height="1" fill="#c0c0c0"/><rect x="548.6" y="234.4" width="6" height="1" fill="#606060"/><path d="M549,235.6 H554.2 L553.8,241.6 H549.4 Z" fill="#787878" stroke="#505050" stroke-width="0.4"/><path d="M550.6,236.4 V241 M552.6,236.4 V241" stroke="#a0a0a0" stroke-width="0.4"/><circle cx="609.6" cy="238" r="3.4" fill="#300606"/><circle cx="609.6" cy="238" r="1.6" fill="#a01818"/><path d="M618,234.6 L620.2,237.6 V241.6 M622.6,234.6 L620.2,237.6" fill="none" stroke="#707070" stroke-width="0.9"/><path d="M624,235 L622.2,241.4" stroke="#303030" stroke-width="0.9"/><path d="M630.4,238.6 Q630.2,234.6 633.6,234.4" fill="none" stroke="#2030a0" stroke-width="1"/><path d="M636.6,237 Q636.8,241 633.2,241.4" fill="none" stroke="#20a040" stroke-width="1"/><path d="M633,233.4 L635,234.5 L633,235.6 Z" fill="#2030a0"/><path d="M634,240.2 L632,241.4 L634,242.6 Z" fill="#20a040"/><rect x="535" y="247.5" width="104.5" height="15" fill="#fff" /><rect x="535" y="262.5" width="104.5" height="100" fill="#000" /><circle cx="545.10" cy="297.3" r="2.1" fill="none" stroke="#20b83a" stroke-width="1.5"/><rect x="542.50" y="326.59999999999997" width="5.2" height="5.2" fill="#20b040"/><rect x="544.10" y="328.2" width="2" height="2" fill="#004010"/><circle cx="555.62" cy="297.3" r="2.1" fill="none" stroke="#20b83a" stroke-width="1.5"/><circle cx="555.62" cy="329.2" r="2.1" fill="none" stroke="#20b83a" stroke-width="1.5"/><circle cx="566.14" cy="297.3" r="2.1" fill="none" stroke="#20b83a" stroke-width="1.5"/><circle cx="566.14" cy="329.2" r="2.1" fill="none" stroke="#20b83a" stroke-width="1.5"/><circle cx="576.66" cy="297.3" r="2.1" fill="none" stroke="#20b83a" stroke-width="1.5"/><circle cx="576.66" cy="329.2" r="2.1" fill="none" stroke="#20b83a" stroke-width="1.5"/><circle cx="587.18" cy="297.3" r="2.1" fill="none" stroke="#20b83a" stroke-width="1.5"/><circle cx="587.18" cy="329.2" r="2.1" fill="none" stroke="#20b83a" stroke-width="1.5"/><circle cx="597.70" cy="297.3" r="2.1" fill="none" stroke="#20b83a" stroke-width="1.5"/><circle cx="597.70" cy="329.2" r="2.1" fill="none" stroke="#20b83a" stroke-width="1.5"/><circle cx="608.22" cy="297.3" r="2.1" fill="none" stroke="#20b83a" stroke-width="1.5"/><circle cx="608.22" cy="329.2" r="2.1" fill="none" stroke="#20b83a" stroke-width="1.5"/><circle cx="618.74" cy="297.3" r="2.1" fill="none" stroke="#20b83a" stroke-width="1.5"/><circle cx="618.74" cy="329.2" r="2.1" fill="none" stroke="#20b83a" stroke-width="1.5"/><circle cx="629.26" cy="297.3" r="2.1" fill="none" stroke="#20b83a" stroke-width="1.5"/><circle cx="629.26" cy="329.2" r="2.1" fill="none" stroke="#20b83a" stroke-width="1.5"/><path d="M540.3,302.4 H634.2 V324.3 H540.3 Z M540.3,307.7 H545.6 V318.4 H540.3" fill="none" stroke="#c0c0c0" stroke-width="0.6"/><text x="576.5" y="361" font-size="5.5" fill="#b8b8b8" font-weight="normal" text-anchor="start" stroke="#b8b8b8" stroke-width="0.05" >Нажать и перетянуть</text><line x1="0" y1="366" x2="640" y2="366" stroke="#f4f2ee" stroke-width="0.6" /><rect x="0.6" y="366.6" width="37.4" height="17.6" fill="#d4d0c8"/><path d="M0.6,384.20000000000005 V366.6 H38.0" fill="none" stroke="#808080" stroke-width="0.6"/><path d="M0.6,384.20000000000005 H38.0 V366.6" fill="none" stroke="#ffffff" stroke-width="0.6"/><text x="3" y="373.6" font-size="5.5" fill="#404040" font-weight="normal" text-anchor="start" stroke="#404040" stroke-width="0.2" >X:</text><text x="15.5" y="373.8" font-size="5.5" fill="#202020" font-weight="normal" text-anchor="start" stroke="#202020" stroke-width="0.2" >56,8</text><text x="27.2" y="373.8" font-size="4.5" fill="#303030" font-weight="normal" text-anchor="start" stroke="#303030" stroke-width="0.15" >мм</text><text x="3" y="381.4" font-size="5.5" fill="#404040" font-weight="normal" text-anchor="start" stroke="#404040" stroke-width="0.2" >Y:</text><text x="15.5" y="381.6" font-size="5.5" fill="#202020" font-weight="normal" text-anchor="start" stroke="#202020" stroke-width="0.2" >16,4</text><text x="27.2" y="381.6" font-size="4.5" fill="#303030" font-weight="normal" text-anchor="start" stroke="#303030" stroke-width="0.15" >мм</text><rect x="39.4" y="366.6" width="77" height="17.6" fill="#d4d0c8"/><path d="M39.4,384.20000000000005 V366.6 H116.4" fill="none" stroke="#808080" stroke-width="0.6"/><path d="M39.4,384.20000000000005 H116.4 V366.6" fill="none" stroke="#ffffff" stroke-width="0.6"/><text x="42" y="373.3" font-size="5.5" fill="#404040" font-weight="normal" text-anchor="start" stroke="#404040" stroke-width="0.2" >видим.</text><text x="43" y="381" font-size="5.5" fill="#404040" font-weight="normal" text-anchor="start" stroke="#404040" stroke-width="0.2" >актив.</text><rect x="62" y="367.5" width="47.2" height="8" fill="#000" /><text x="63.5" y="374.2" font-size="6.8" fill="#d02030" font-weight="normal" text-anchor="start" stroke="#d02030" stroke-width="0.12" textLength="7" lengthAdjust="spacingAndGlyphs">M1</text><text x="72.5" y="374.2" font-size="6.8" fill="#ffffff" font-weight="normal" text-anchor="start" stroke="#ffffff" stroke-width="0.12" textLength="7" lengthAdjust="spacingAndGlyphs">K1</text><text x="82" y="374.2" font-size="6.8" fill="#20a040" font-weight="normal" text-anchor="start" stroke="#20a040" stroke-width="0.12" textLength="8" lengthAdjust="spacingAndGlyphs">M2</text><text x="91.5" y="374.2" font-size="6.8" fill="#d8d8d8" font-weight="normal" text-anchor="start" stroke="#d8d8d8" stroke-width="0.12" textLength="7.5" lengthAdjust="spacingAndGlyphs">K2</text><text x="101.5" y="374.2" font-size="6.8" fill="#e8e020" font-weight="normal" text-anchor="start" stroke="#e8e020" stroke-width="0.12" textLength="5.5" lengthAdjust="spacingAndGlyphs">Ф</text><circle cx="66" cy="379.4" r="2.3" fill="#fbfbfb" stroke="#c8c4bc" stroke-width="0.5"/><path d="M64.3,381.09999999999997 A2.4,2.4 0 0 1 67.7,377.7" fill="none" stroke="#404040" stroke-width="0.7"/><circle cx="75.6" cy="379.4" r="2.3" fill="#fbfbfb" stroke="#c8c4bc" stroke-width="0.5"/><path d="M73.89999999999999,381.09999999999997 A2.4,2.4 0 0 1 77.3,377.7" fill="none" stroke="#404040" stroke-width="0.7"/><circle cx="85.5" cy="379.4" r="2.3" fill="#fbfbfb" stroke="#c8c4bc" stroke-width="0.5"/><path d="M83.8,381.09999999999997 A2.4,2.4 0 0 1 87.2,377.7" fill="none" stroke="#404040" stroke-width="0.7"/><circle cx="85.5" cy="379.4" r="0.9" fill="#000"/><circle cx="95" cy="379.4" r="2.3" fill="#fbfbfb" stroke="#c8c4bc" stroke-width="0.5"/><path d="M93.3,381.09999999999997 A2.4,2.4 0 0 1 96.7,377.7" fill="none" stroke="#404040" stroke-width="0.7"/><circle cx="104" cy="379.4" r="2.3" fill="#fbfbfb" stroke="#c8c4bc" stroke-width="0.5"/><path d="M102.3,381.09999999999997 A2.4,2.4 0 0 1 105.7,377.7" fill="none" stroke="#404040" stroke-width="0.7"/><text x="111.5" y="377" font-size="5.5" fill="#404040" font-weight="normal" text-anchor="start" stroke="#404040" stroke-width="0.2" >?</text><rect x="117.8" y="366.6" width="20.6" height="17.6" fill="#d4d0c8"/><path d="M117.8,384.20000000000005 V366.6 H138.4" fill="none" stroke="#808080" stroke-width="0.6"/><path d="M117.8,384.20000000000005 H138.4 V366.6" fill="none" stroke="#ffffff" stroke-width="0.6"/><rect x="119.6" y="367.6" width="11.6" height="15.4" fill="#9c9c9c" /><path d="M120.8,370.4 L124.6,370.6 L128.4,375.4" fill="none" stroke="#000" stroke-width="1.9"/><circle cx="128.9" cy="376.2" r="1.9" fill="#fff" stroke="#000" stroke-width="1.2"/><rect x="139.8" y="366.6" width="499.4" height="17.6" fill="#d4d0c8"/><path d="M139.8,384.20000000000005 V366.6 H639.2" fill="none" stroke="#808080" stroke-width="0.6"/><path d="M139.8,384.20000000000005 H639.2 V366.6" fill="none" stroke="#ffffff" stroke-width="0.6"/><text x="143" y="373.3" font-size="5.5" fill="#383878" font-weight="normal" text-anchor="start" stroke="#383878" stroke-width="0.08" textLength="175.5">Курсор: Выделение, перемещение, копирование, вставка и удаление.</text><text x="143" y="379.8" font-size="5.5" fill="#383878" font-weight="normal" text-anchor="start" stroke="#383878" stroke-width="0.08" >&lt;Колесико&gt; = Масштаб</text><line x1="0" y1="384.9" x2="640" y2="384.9" stroke="#ffffff" stroke-width="0.9" /><rect x="1" y="386.6" width="25.6" height="12.2" fill="#d4d0c8"/><path d="M1,398.8 V386.6 H26.6" fill="none" stroke="#ffffff" stroke-width="0.6"/><path d="M1,398.8 H26.6 V386.6" fill="none" stroke="#404040" stroke-width="0.6"/><path d="M3,388.6 Q4.6,388 6,388.8 V391.6 Q4.6,390.8 3,391.4 Z" fill="#e84020"/><path d="M6.4,388.9 Q7.8,389.6 9.2,389 V391.8 Q7.8,392.4 6.4,391.7 Z" fill="#40b030"/><path d="M3,391.9 Q4.6,391.2 6,392 V394.8 Q4.6,394 3,394.6 Z" fill="#3070e0"/><path d="M6.4,392.2 Q7.8,392.8 9.2,392.2 V395 Q7.8,395.6 6.4,394.9 Z" fill="#f0c020"/><text x="10.6" y="394.6" font-size="6" fill="#000" font-weight="bold" text-anchor="start" stroke="#000" stroke-width="0.05" >Пуск</text><rect x="28.8" y="386.6" width="79.5" height="12.2" fill="#d4d0c8"/><path d="M28.8,398.8 V386.6 H108.3" fill="none" stroke="#ffffff" stroke-width="0.6"/><path d="M28.8,398.8 H108.3 V386.6" fill="none" stroke="#404040" stroke-width="0.6"/><circle cx="34.6" cy="392.6" r="3.2" fill="#d84030"/><path d="M34.6,392.6 L37.4,394.2 A3.2,3.2 0 0 1 31.8,394.2 Z" fill="#30a040"/><path d="M34.6,392.6 L34.6,389.4 A3.2,3.2 0 0 1 37.4,394.2 Z" fill="#e8c020"/><circle cx="34.6" cy="392.6" r="1.3" fill="#3070d8" stroke="#fff" stroke-width="0.5"/><text x="40.5" y="394.6" font-size="5.5" fill="#101010" font-weight="normal" text-anchor="start" stroke="#101010" stroke-width="0.1" >Максимальный ток печ...</text><rect x="110.6" y="386.6" width="80.4" height="12.2" fill="#eceae6"/><path d="M110.6,398.8 V386.6 H191.0" fill="none" stroke="#808080" stroke-width="0.6"/><path d="M110.6,398.8 H191.0 V386.6" fill="none" stroke="#ffffff" stroke-width="0.6"/><circle cx="116" cy="389.4" r="1.2" fill="#606060"/><path d="M115.3,390.4 V393 L113.6,395.8 H120.4 L119,393.8 H116.6 V390.4 Z" fill="#606060"/><circle cx="119.4" cy="394.6" r="1.2" fill="#404040"/><text x="122.5" y="394.5" font-size="6" fill="#000" font-weight="bold" text-anchor="start" stroke="#000" stroke-width="0.05" >Sprint-Layout 5.0</text><text x="534" y="394.5" font-size="5.5" fill="#101010" font-weight="normal" text-anchor="start" stroke="#101010" stroke-width="0.1" >Ссылки</text><text x="556.4" y="392.6" font-size="7" fill="#202020" font-weight="bold" text-anchor="start" stroke="#202020" stroke-width="0.05" >»</text><rect x="562.8" y="386.8" width="77.2" height="12.6" fill="#d4d0c8"/><path d="M562.8,399.40000000000003 V386.8 H640.0" fill="none" stroke="#808080" stroke-width="0.6"/><path d="M562.8,399.40000000000003 H640.0 V386.8" fill="none" stroke="#ffffff" stroke-width="0.6"/><text x="621" y="394.6" font-size="5.5" fill="#101010" font-weight="normal" text-anchor="start" stroke="#101010" stroke-width="0.1" >19:10</text><path d="M564.4,396 L571.6,389.8 V396 Z" fill="#98d8a8" stroke="#308850" stroke-width="0.6"/><path d="M566.5,395.2 L570.6,392.4" stroke="#308850" stroke-width="0.5"/><path d="M575,396 L575.6,390 L578.6,389.4 L576.6,392.4 L579.6,395.6" fill="none" stroke="#d82838" stroke-width="1.1"/><circle cx="579.8" cy="396" r="0.9" fill="#000"/><path d="M583.4,391.4 H585 L587.4,389.4 V396.8 L585,394.8 H583.4 Z" fill="#f4f4f4" stroke="#707878" stroke-width="0.5"/><path d="M588.4,391 Q589.6,393 588.4,395.2" fill="none" stroke="#50a060" stroke-width="0.6"/><path d="M592,389.6 H596 L597.8,391.4 V396.6 H592 Z" fill="#40a050" stroke="#206030" stroke-width="0.5"/><path d="M593,392 H596.8 M593,393.8 H596.8" stroke="#e0f0e0" stroke-width="0.5"/><ellipse cx="603.6" cy="391.8" rx="2.2" ry="2.6" fill="#f0f0f0" stroke="#404040" stroke-width="0.6"/><rect x="602.6" y="394.4" width="2" height="2" fill="#505050"/><path d="M617.2,390.4 Q614,388.4 612.4,390.8 Q612,392.6 614.6,393 Q617.4,393.6 617,395.6 Q615.4,397.6 612,396" fill="none" stroke="#c82828" stroke-width="1.2"/><line x1="55.3" y1="21.5" x2="55.3" y2="32.5" stroke="#a09c94" stroke-width="0.6" /><line x1="56.0" y1="21.5" x2="56.0" y2="32.5" stroke="#f8f6f2" stroke-width="0.6" /><line x1="86.3" y1="21.5" x2="86.3" y2="32.5" stroke="#a09c94" stroke-width="0.6" /><line x1="87.0" y1="21.5" x2="87.0" y2="32.5" stroke="#f8f6f2" stroke-width="0.6" /><line x1="144.5" y1="21.5" x2="144.5" y2="32.5" stroke="#a09c94" stroke-width="0.6" /><line x1="145.2" y1="21.5" x2="145.2" y2="32.5" stroke="#f8f6f2" stroke-width="0.6" /><line x1="235.6" y1="21.5" x2="235.6" y2="32.5" stroke="#a09c94" stroke-width="0.6" /><line x1="236.29999999999998" y1="21.5" x2="236.29999999999998" y2="32.5" stroke="#f8f6f2" stroke-width="0.6" /><line x1="253" y1="21.5" x2="253" y2="32.5" stroke="#a09c94" stroke-width="0.6" /><line x1="253.7" y1="21.5" x2="253.7" y2="32.5" stroke="#f8f6f2" stroke-width="0.6" /><line x1="284.6" y1="21.5" x2="284.6" y2="32.5" stroke="#a09c94" stroke-width="0.6" /><line x1="285.3" y1="21.5" x2="285.3" y2="32.5" stroke="#f8f6f2" stroke-width="0.6" /><line x1="320" y1="21.5" x2="320" y2="32.5" stroke="#a09c94" stroke-width="0.6" /><line x1="320.7" y1="21.5" x2="320.7" y2="32.5" stroke="#f8f6f2" stroke-width="0.6" /><line x1="382.5" y1="21.5" x2="382.5" y2="32.5" stroke="#a09c94" stroke-width="0.6" /><line x1="383.2" y1="21.5" x2="383.2" y2="32.5" stroke="#f8f6f2" stroke-width="0.6" /><path d="M3.4,23.6 H7.6 L9.3,25.3 V30 H3.4 Z" fill="#fafafa" stroke="#505050" stroke-width="0.7"/><path d="M7.4,23.6 V25.5 H9.3" fill="#303030" stroke="#303030" stroke-width="0.5"/><path d="M16.3,25.3 H19 L19.7,26 H22 V30 H16.3 Z" fill="#b8b040" stroke="#505018" stroke-width="0.5"/><path d="M17.2,27.4 H24 L22.6,30 H16.3 Z" fill="#d4cc58" stroke="#505018" stroke-width="0.4"/><path d="M20.8,25 Q22,23.6 23.4,24.4" fill="none" stroke="#303030" stroke-width="0.6"/><path d="M23.6,23.6 L23.8,25.2 L22.4,24.8Z" fill="#303030"/><rect x="30.2" y="23.8" width="6.6" height="6.4" fill="#2c2c1c"/><rect x="31.6" y="24.2" width="3.8" height="2.5" fill="#e8e8e0"/><rect x="33.6" y="24.5" width="0.9" height="1.6" fill="#2c2c1c"/><rect x="31.4" y="27.8" width="4.2" height="2.2" fill="#000"/><rect x="34.2" y="28.6" width="1" height="1" fill="#c0c0c0"/><rect x="45" y="23.6" width="4.4" height="2.6" fill="#e0e0e0" stroke="#404040" stroke-width="0.6"/><rect x="43.4" y="26.2" width="7.6" height="3.6" rx="0.8" fill="#909090" stroke="#303030" stroke-width="0.7"/><rect x="44.5" y="27.7" width="5.5" height="0.9" fill="#303030"/><path d="M62.6,27.8 Q63.5,25 66,25.3 Q68,25.8 67.6,28.3" fill="none" stroke="#101040" stroke-width="1.1"/><path d="M61.2,26.6 L64.4,27.3 L62.4,29.6 Z" fill="#101040"/><path d="M75.6,28.3 Q75.6,25.6 78,25.4 Q80,25.5 80.5,27.6" fill="none" stroke="#a8a49c" stroke-width="0.8"/><path d="M81.6,26.7 L80.8,28.8 L79.4,27.2 Z" fill="#a8a49c"/><path d="M93.3,23.4 L96.8,28 M97.4,23.4 L94,28" stroke="#303040" stroke-width="0.8"/><circle cx="93.9" cy="29.4" r="1.2" fill="none" stroke="#6a6aa8" stroke-width="0.9"/><circle cx="96.8" cy="29.4" r="1.2" fill="none" stroke="#6a6aa8" stroke-width="0.8"/><path d="M105,23.4 H108 L109,24.4 V28.5 H105 Z" fill="#e8e8e8" stroke="#606060" stroke-width="0.6"/><path d="M108.2,26 H111.6 L113,27.4 V30.8 H108.2 Z" fill="#f0f0f8" stroke="#505070" stroke-width="0.6"/><rect x="109" y="28.4" width="3.2" height="1.6" fill="#8080c0"/><rect x="118.8" y="24.2" width="6.6" height="6.4" rx="0.6" fill="#b8b4ac" stroke="#989490" stroke-width="0.5"/><rect x="120.6" y="23.4" width="3" height="1.6" fill="#a8a49c"/><rect x="121.6" y="27" width="4.2" height="4" fill="#e8e6e0" stroke="#a8a49c" stroke-width="0.4"/><rect x="132.8" y="23.8" width="5.9" height="1.1" fill="#404040"/><rect x="134.6" y="23" width="2.3" height="0.9" fill="#404040"/><path d="M133.2,25.2 H138.3 L137.9,30.8 H133.6 Z" fill="#5a5a5a" stroke="#303030" stroke-width="0.5"/><path d="M134.8,26 V30 M136.6,26 V30" stroke="#909090" stroke-width="0.4"/><ellipse cx="153.8" cy="27.3" rx="5" ry="3.4" fill="#ecec90" opacity="0.9"/><text x="150" y="29.6" font-size="6" fill="#3a3a10" font-weight="bold" text-anchor="start" stroke="#3a3a10" stroke-width="0.05" font-style="italic">42</text><circle cx="167.3" cy="27.3" r="4.6" fill="#f4c8c8" opacity="0.6"/><path d="M170.2,25 A3.2,3.2 0 1 0 170.6,28.6" fill="none" stroke="#a01010" stroke-width="1.3"/><path d="M168.6,23.6 L171.6,23.4 L171,26.4 Z" fill="#a01010"/><path d="M176,26.6 H178.2 L177.1,28 Z" fill="#101010"/><rect x="184.4" y="24.6" width="6.2" height="5.4" fill="#a8a8e8" opacity="0.85"/><path d="M185.4,23.4 Q183,27.3 185.4,31.2 M189.6,23.4 Q192,27.3 189.6,31.2" fill="none" stroke="#000" stroke-width="1.6"/><path d="M184,27.3 H191 M187.5,23.5 V31" stroke="#404090" stroke-width="0.6"/><rect x="197.5" y="24.5" width="7" height="5.6" fill="#a8a8e8" opacity="0.8"/><path d="M196.6,24.4 Q200.5,22.2 204.8,24.4 M196.6,30.4 Q200.5,32.3 204.8,30.4" fill="none" stroke="#000" stroke-width="1.4"/><path d="M197,27.3 H204.5 M200.7,24.5 V30.4" stroke="#404090" stroke-width="0.6"/><circle cx="214" cy="27.3" r="3.6" fill="none" stroke="#b8b4ac" stroke-width="0.8"/><path d="M211.6,29.4 L216.4,25.2 M213.4,24.6 L216.6,24.8 L216.4,27.6" fill="none" stroke="#c0bcb4" stroke-width="0.7"/><rect x="223.6" y="22.8" width="1.6" height="8.6" fill="#e8e890" opacity="0.9"/><rect x="230.6" y="22.8" width="1.6" height="8.6" fill="#e8e890" opacity="0.9"/><rect x="223.6" y="26.3" width="8.6" height="1.6" fill="#000"/><circle cx="227.7" cy="23.9" r="0.9" fill="#302850"/><circle cx="227.7" cy="30" r="0.9" fill="#302850"/><rect x="241" y="22.8" width="2.6" height="1.6" fill="#707070"/><rect x="241" y="25.8" width="6.8" height="1.6" fill="#6a6a6a"/><rect x="246" y="27.2" width="2.4" height="1.6" fill="#7a7a7a"/><rect x="241" y="29.2" width="7.6" height="1.8" fill="#6a6a6a"/><circle cx="261.90000000000003" cy="25.3" r="1.8" fill="none" stroke="#b4b0a8" stroke-width="0.6"/><circle cx="261.90000000000003" cy="28.9" r="2.2" fill="none" stroke="#b4b0a8" stroke-width="0.6"/><circle cx="261.90000000000003" cy="28.9" r="0.5" fill="#a0a0a0"/><circle cx="274.90000000000003" cy="25.3" r="1.8" fill="none" stroke="#b4b0a8" stroke-width="0.6"/><circle cx="274.90000000000003" cy="28.9" r="2.2" fill="none" stroke="#b4b0a8" stroke-width="0.6"/><circle cx="274.90000000000003" cy="28.9" r="0.5" fill="#a0a0a0"/><circle cx="293" cy="26.4" r="3.6" fill="#e4e478" stroke="#505010" stroke-width="0.8"/><path d="M295.6,29 L298.2,31.3" stroke="#000" stroke-width="1.3"/><path d="M314.6,25.2 A4,4 0 1 0 314.6,29.4 L311.2,27.3 Z" fill="#000"/><path d="M314.6,25.2 A4,4 0 0 1 314.6,29.4 L311.8,27.3 Z" fill="#e8e0a0"/><rect x="322.8" y="22.6" width="11" height="9" fill="#20b040"/><path d="M327,31.6 L333.8,31.6 L333.8,24 Z" fill="#e8e4a0"/><path d="M327,27.8 L333.6,22.8" stroke="#000" stroke-width="1"/><path d="M329.5,27 L331,28.8 L332.5,26.8 M331,28.8 V31.6" fill="none" stroke="#000" stroke-width="1.1"/><circle cx="326" cy="29.6" r="0.9" fill="#000"/><circle cx="326" cy="25.5" r="0.9" fill="#108020"/><rect x="341" y="22" width="9.6" height="5.2" fill="#000"/><text x="345.8" y="26.6" font-size="4.5" fill="#e0e0e0" font-weight="bold" text-anchor="middle" stroke="#e0e0e0" stroke-width="0.05" >?</text><ellipse cx="343.6" cy="29.7" rx="1.3" ry="0.8" fill="#188828"/><ellipse cx="347.8" cy="29.7" rx="1.3" ry="0.8" fill="#188828"/><rect x="354.5" y="22" width="9.6" height="5.2" fill="#4a2e18"/><rect x="355.6" y="23.2" width="1.6" height="1.4" fill="#b87038"/><rect x="358.4" y="23.2" width="1.6" height="1.4" fill="#b87038"/><rect x="361.2" y="23.2" width="1.6" height="1.4" fill="#b87038"/><rect x="355" y="25.4" width="8.6" height="1" fill="#6a4020"/><circle cx="356.4" cy="29.8" r="0.7" fill="#40a050"/><circle cx="359" cy="29.8" r="0.7" fill="#40a050"/><path d="M361,28.6 L363.6,31 M363.6,28.6 L361,31" stroke="#c03020" stroke-width="0.6"/><rect x="370" y="22.2" width="6.2" height="9.3" fill="#000"/><rect x="371.2" y="24.6" width="3.8" height="5.8" fill="#5a1212"/><rect x="372.5" y="22.6" width="1.2" height="1.4" fill="#e0e0e0"/><circle cx="390.8" cy="27" r="4.8" fill="#0000c8" stroke="#c8c8ff" stroke-width="0.5"/><rect x="390.2" y="26" width="1.3" height="3.6" fill="#fff"/><circle cx="390.85" cy="24.6" r="0.75" fill="#fff"/><path d="M400,23.6 H406.4 V30.2" fill="none" stroke="#001060" stroke-width="1.2"/><path d="M402,22.2 V28.4 H408.6" fill="none" stroke="#108020" stroke-width="1.2"/><circle cx="404.4" cy="26.6" r="1.5" fill="none" stroke="#20a040" stroke-width="0.8"/><path d="M4.5,38.3 L4.5,45 L6,43.6 L7.2,45.6 L8,45.2 L7,43.2 L8.8,43 Z" fill="#fff" stroke="#202020" stroke-width="0.7"/><circle cx="6" cy="50.3" r="2.7" fill="#e8e8e8" stroke="#303030" stroke-width="0.9"/><path d="M7.8,52.4 L10,55.5" stroke="#000" stroke-width="1.4"/><path d="M3.2,66 L5,65.3 L8.3,61.6 L10,61" fill="none" stroke="#000" stroke-width="1.2"/><circle cx="5.4" cy="74.1" r="2.1" fill="#fff" stroke="#000" stroke-width="1.6"/><path d="M40.1,73.4 H42.4 L41.25,75.1 Z" fill="#202020"/><rect x="4.5" y="83" width="3.6" height="5.2" fill="#000"/><circle cx="5.3" cy="96.3" r="2.3" fill="#f8f8f8" stroke="#101010" stroke-width="1.1"/><path d="M3.2,109.6 L5.4,105 H10 L7.6,107.3 L10,109.6 Z" fill="#000"/><path d="M4,114.8 L5.8,116.6 L4,118.4 L2.2,116.6 Z" fill="#fff" stroke="#000" stroke-width="1"/><circle cx="7.8" cy="119.2" r="1.5" fill="#fff" stroke="#101010" stroke-width="1"/><circle cx="9.4" cy="121.2" r="1.3" fill="#fff" stroke="#101010" stroke-width="1"/><circle cx="6.4" cy="121.4" r="1" fill="#202020"/><text x="2.5" y="131.2" font-size="5.5" fill="#101010" font-weight="bold" text-anchor="start" stroke="#101010" stroke-width="0.05" >ab</text><line x1="10.7" y1="126.8" x2="10.7" y2="131.6" stroke="#101010" stroke-width="0.8" /><circle cx="4.5" cy="137.5" r="1.2" fill="#103010"/><circle cx="4" cy="142" r="1.2" fill="#103010"/><circle cx="8.5" cy="142" r="1.2" fill="#103010"/><defs><linearGradient id="ag" x1="0" y1="0" x2="0" y2="1"><stop offset="0" stop-color="#8fa0f0"/><stop offset="1" stop-color="#3048b0"/></linearGradient></defs><path d="M3,155 L5.9,147.4 H7.5 L10.4,155 H8.6 L8,153 H5.4 L4.8,155 Z M5.9,151.6 H7.5 L6.7,149.2 Z" fill="url(#ag)" fill-rule="evenodd"/><ellipse cx="6.7" cy="162.4" rx="4.7" ry="1.25" transform="rotate(43 6.7 162.4)" fill="#000"/><rect x="2.8" y="170.8" width="8.4" height="4.4" fill="#fcfcfc"/><path d="M2.6,175.2 H11.4 M3.2,173 V175.2" stroke="#101010" stroke-width="0.8"/><rect x="2.8" y="182.6" width="7.8" height="4.8" rx="0.6" fill="#707070"/><rect x="3.6" y="183.4" width="6.2" height="3.2" fill="#a0a0a0"/><circle cx="6.7" cy="185" r="1.3" fill="#505050"/><circle cx="6.5" cy="194.5" r="3.6" fill="#f0c0c0" opacity="0.7"/><circle cx="6.5" cy="194.5" r="2.8" fill="#c81020"/><circle cx="6.5" cy="194.5" r="0.9" fill="#fff"/><line x1="1" y1="206.3" x2="45.5" y2="206.3" stroke="#a09c94" stroke-width="0.7" /><line x1="1" y1="207.2" x2="45.5" y2="207.2" stroke="#f6f4f0" stroke-width="0.7" /><rect x="2.6" y="209.6" width="9" height="10.4" fill="#e8e878"/><path d="M5.6,209.6 V220 M8.6,209.6 V220 M2.6,213.1 H11.6 M2.6,216.5 H11.6" stroke="#9a9a40" stroke-width="0.7"/><text x="17.3" y="217.7" font-size="6" fill="#282828" font-weight="normal" text-anchor="start" stroke="#282828" stroke-width="0.06" >1,27</text><text x="29.8" y="217.6" font-size="4.2" fill="#303030" font-weight="normal" text-anchor="start" stroke="#303030" stroke-width="0.15" >мм</text><rect x="6.2" y="227.1" width="8.8" height="1.1" fill="#000"/><circle cx="10.8" cy="225.1" r="0.75" fill="#000"/><circle cx="10.8" cy="230.2" r="0.75" fill="#000"/><rect x="21" y="223.8" width="18.2" height="7.4" fill="#e81818" /><text x="37.2" y="229.6" font-size="5.5" fill="#ffffff" font-weight="normal" text-anchor="end" stroke="#ffffff" stroke-width="0.1" >2.00</text><rect x="41.4" y="227.1" width="2.1" height="2" fill="#5a5a5a" /><rect x="41.4" y="236.6" width="2.1" height="2" fill="#5a5a5a" /><rect x="41.4" y="244.6" width="2.1" height="2" fill="#5a5a5a" /><rect x="41.4" y="256.1" width="2.1" height="2" fill="#5a5a5a" /><rect x="41.4" y="264.6" width="2.1" height="2" fill="#5a5a5a" /><rect x="21" y="234" width="18.2" height="7" fill="#000" /><text x="37.2" y="239.6" font-size="5.5" fill="#d8dca0" font-weight="normal" text-anchor="end" stroke="#d8dca0" stroke-width="0.05" >2.50</text><rect x="21" y="242.5" width="18.2" height="7" fill="#000" /><text x="37.2" y="248.1" font-size="5.5" fill="#d8dca0" font-weight="normal" text-anchor="end" stroke="#d8dca0" stroke-width="0.05" >0.60</text><rect x="21" y="253.5" width="18.2" height="7" fill="#000" /><text x="37.2" y="259.1" font-size="5.5" fill="#d8dca0" font-weight="normal" text-anchor="end" stroke="#d8dca0" stroke-width="0.05" >0.24</text><rect x="21" y="262" width="18.2" height="7" fill="#000" /><text x="37.2" y="267.6" font-size="5.5" fill="#d8dca0" font-weight="normal" text-anchor="end" stroke="#d8dca0" stroke-width="0.05" >1.06</text><circle cx="11" cy="242.2" r="2.6" fill="#fff" stroke="#000" stroke-width="1.7"/><path d="M8.6,236.2 H13.6" stroke="#303030" stroke-width="0.5"/><rect x="8.4" y="235.6" width="1.3" height="1.2" fill="#303030"/><rect x="12.5" y="235.6" width="1.3" height="1.2" fill="#303030"/><path d="M6.2,247.7 H9.4 M12.6,247.7 H15.8" stroke="#303030" stroke-width="0.5"/><path d="M9.6,246.9 V248.5 L10.5,247.7 Z M12.4,246.9 V248.5 L11.5,247.7 Z" fill="#303030"/><rect x="7" y="256.2" width="6" height="9.4" fill="#000"/><path d="M8.6,254.6 H12.8" stroke="#303030" stroke-width="0.5"/><rect x="8.4" y="254" width="1.3" height="1.2" fill="#303030"/><rect x="12" y="254" width="1.3" height="1.2" fill="#303030"/><path d="M15.6,258 V265.4" stroke="#303030" stroke-width="0.5"/><path d="M14.8,258.6 H16.4 L15.6,257.4 Z M14.8,264.8 H16.4 L15.6,266 Z" fill="#303030"/><line x1="1" y1="271.2" x2="45.5" y2="271.2" stroke="#a09c94" stroke-width="0.7" /><line x1="1" y1="272.1" x2="45.5" y2="272.1" stroke="#f6f4f0" stroke-width="0.7" /><rect x="2.5" y="275.4" width="40.6" height="25.4" fill="#008800" stroke="#a0f0a0" stroke-width="0.5"/><rect x="2.7" y="275.6" width="20.8" height="15.4" fill="#10f010" /></svg>
</body></html>
